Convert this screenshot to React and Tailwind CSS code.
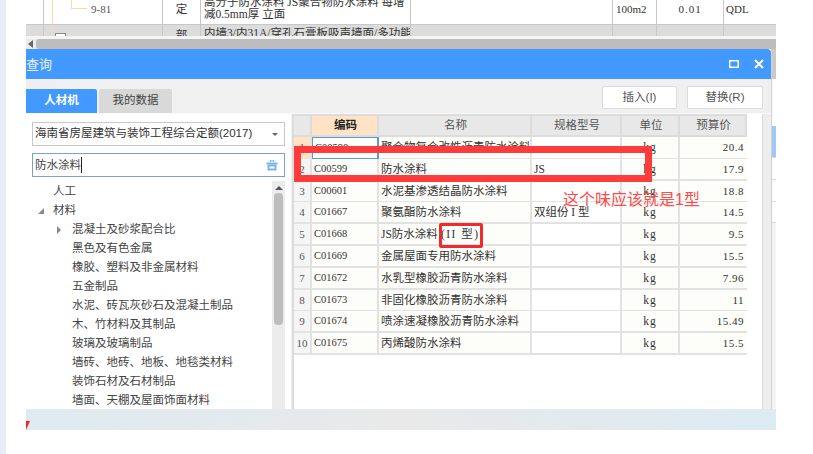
import React from 'react';

const CJK = { fontFamily: '"Liberation Serif", "Noto Sans CJK SC", serif' };
const UI = { fontFamily: '"Liberation Sans", "Noto Sans CJK SC", sans-serif' };

const ROWS = [
  ['C00598', '聚合物复合改性沥青防水涂料', '', '20.4'],
  ['C00599', '防水涂料', 'JS', '17.9'],
  ['C00601', '水泥基渗透结晶防水涂料', '', '18.8'],
  ['C01667', '聚氨酯防水涂料', '双组份 I 型', '14.5'],
  ['C01668', <>JS防水涂料<span className="pl-[3px] tracking-[1.5px]">(II 型)</span></>, '', '9.5'],
  ['C01669', '金属屋面专用防水涂料', '', '15.5'],
  ['C01672', '水乳型橡胶沥青防水涂料', '', '7.96'],
  ['C01673', '非固化橡胶沥青防水涂料', '', '11'],
  ['C01674', '喷涂速凝橡胶沥青防水涂料', '', '15.49'],
  ['C01675', '丙烯酸防水涂料', '', '15.5'],
];

const TREE = [
  { label: '人工', indent: 'pl-[21px]' },
  { label: '材料', indent: 'pl-[21px]', mark: 'open' },
  { label: '混凝土及砂浆配合比', indent: 'pl-[40px]', mark: 'closed' },
  { label: '黑色及有色金属', indent: 'pl-[40px]' },
  { label: '橡胶、塑料及非金属材料', indent: 'pl-[40px]' },
  { label: '五金制品', indent: 'pl-[40px]' },
  { label: '水泥、砖瓦灰砂石及混凝土制品', indent: 'pl-[40px]' },
  { label: '木、竹材料及其制品', indent: 'pl-[40px]' },
  { label: '玻璃及玻璃制品', indent: 'pl-[40px]' },
  { label: '墙砖、地砖、地板、地毯类材料', indent: 'pl-[40px]' },
  { label: '装饰石材及石材制品', indent: 'pl-[40px]' },
  { label: '墙面、天棚及屋面饰面材料', indent: 'pl-[40px]' },
];

const GRID = 'grid grid-cols-[18px_67px_153px_90px_58px_67px]';
const BG_GRID = 'grid grid-cols-[18px_119px_38px_210px_202px_44px_67px_52px]';

const BackgroundTable = () => (
  <div className="h-[36px] overflow-hidden text-[11.5px] leading-[12px] text-[#333]" style={CJK}>
    <div className={`${BG_GRID} h-[25px] bg-white border-b border-[#c8c8c8]`}>
      <div className="border-r border-[#c8c8c8]" />
      <div className="border-r border-[#c8c8c8] relative pl-[47px] pt-[3px] text-[11px] text-[#555]">
        <span className="absolute left-[8px] top-0 h-full w-px bg-[#fbd9a8]" />
        <span className="absolute left-[27px] top-0 h-[9px] w-[16px] border-l border-b border-[#fbd9a8]" />
        9-81
      </div>
      <div className="border-r border-[#c8c8c8] text-center pt-[3px]">定</div>
      <div className="border-r border-[#c8c8c8] pl-[3px] -mt-[4px] whitespace-nowrap overflow-hidden">
        高分子防水涂料 JS聚合物防水涂料 每增<br />减0.5mm厚 立面
      </div>
      <div className="border-r border-[#c8c8c8]" />
      <div className="border-r border-[#c8c8c8] pl-[3px] pt-[3px] text-[11px]">100m2</div>
      <div className="border-r border-[#c8c8c8] text-center pt-[3px] text-[11px] tracking-[1px]">0.01</div>
      <div className="pl-[2px] pt-[3px] text-[11px]">QDL</div>
    </div>
    <div className={`${BG_GRID} h-[11px] bg-[#dcdcdc]`}>
      <div className="border-r border-[#c8c8c8]" />
      <div className="border-r border-[#c8c8c8] relative">
        <span className="absolute left-[11px] top-[8px] h-[10px] w-[11px] border border-[#888] bg-white" />
        <span className="absolute left-[8px] top-0 h-full w-px bg-[#fbd9a8]" />
      </div>
      <div className="border-r border-[#c8c8c8] text-center pt-[4px]">部</div>
      <div className="border-r border-[#c8c8c8] pl-[3px] pt-[2px] whitespace-nowrap overflow-hidden">内墙3/内31A/穿孔石膏板吸声墙面/多功能</div>
      <div className="border-r border-[#c8c8c8]" />
      <div className="border-r border-[#c8c8c8]" />
      <div className="border-r border-[#c8c8c8]" />
      <div />
    </div>
  </div>
);

const TopScrollbar = () => (
  <div className="h-[13px] bg-[#f4f4f4] pt-[3px]">
    <div className="h-[10px] flex items-center bg-[#ececec]">
      <span className="ml-[2px] w-0 h-0 border-y-[4px] border-y-transparent border-r-[5px] border-r-[#666]" />
      <div className="ml-[3px] flex-1 h-full bg-[#bdbdbd] rounded-l-[3px]" />
    </div>
  </div>
);

const TitleBar = () => (
  <div className="h-[30px] bg-[#4299ff] rounded-tr-[4px] flex items-center justify-between text-white text-[13px]" style={UI}>
    <span className="text-[#e8f2ff] pt-[2px]">查询</span>
    <div className="flex items-center gap-[15px] pr-[7px]">
      <svg width="10" height="8" viewBox="0 0 10 8" fill="none" stroke="white">
        <rect x="0.75" y="0.75" width="8.5" height="6.5" strokeWidth="1.5" />
      </svg>
      <svg width="10" height="10" viewBox="0 0 10 10" fill="none" stroke="white" strokeWidth="2">
        <path d="M1 1L9 9M9 1L1 9" />
      </svg>
    </div>
  </div>
);

const Toolbar = () => (
  <div className="h-[35px] bg-[#f0f0f0] flex justify-between items-start border-b border-[#fafafa]" style={UI}>
    <div className="flex gap-[2px] pt-[10px] text-[11.5px]">
      <div className="w-[71px] h-[24px] bg-[#4299ff] rounded-tr-[2px] text-white font-bold flex items-center justify-center">人材机</div>
      <div className="w-[73px] h-[24px] bg-[#d9d9d9] rounded-t-[2px] text-[#444] flex items-center justify-center">我的数据</div>
    </div>
    <div className="flex gap-[10px] pt-[7px] pr-[8px] text-[11.5px] text-[#555]">
      <button className="w-[75px] h-[23px] bg-white border border-[#dcdcdc] rounded-[2px]">插入(I)</button>
      <button className="w-[76px] h-[23px] bg-white border border-[#dcdcdc] rounded-[2px]">替换(R)</button>
    </div>
  </div>
);

const LeftPanel = () => (
  <div className="w-[265px] h-[295px] bg-white flex flex-col pt-[8px] pl-[6px] pr-[6px] overflow-hidden" style={UI}>
    <div className="h-[24px] border border-[#c8c8c8] flex items-center justify-between pl-[2px] pr-[6px] text-[11.5px] text-[#333] shrink-0">
      <span className="whitespace-nowrap">海南省房屋建筑与装饰工程综合定额(2017)</span>
      <span className="w-0 h-0 border-x-[3px] border-x-transparent border-t-[3px] border-t-[#666]" />
    </div>
    <div className="h-[24px] mt-[7px] border border-[#7aa0cf] flex items-center justify-between pl-[2px] pr-[6px] text-[11.5px] text-[#444] shrink-0">
      <span className="border-r border-[#222] leading-[16px]">防水涂料</span>
      <svg width="12" height="12" viewBox="0 0 12 12" fill="#7ab4ef">
        <path d="M4 3V1.2h4V3H7V2.2H5V3z" />
        <path d="M0.5 3.5h11v2h-11z" />
        <path d="M1.5 5.5h9V11.5h-9zM3.5 7.5v2h5v-2z" fillRule="evenodd" />
      </svg>
    </div>
    <div className="flex flex-1 min-h-0 mt-[4px]">
      <div className="flex-1 overflow-hidden text-[11.5px] text-[#444] pt-[1px]">
        {TREE.map((item) => (
          <div key={item.label} className={`h-[19px] leading-[19px] whitespace-nowrap relative ${item.indent}`}>
            {item.mark === 'open' && (
              <span className="absolute left-[6px] top-[7px] w-0 h-0 border-l-[6px] border-l-transparent border-b-[6px] border-b-[#888]" />
            )}
            {item.mark === 'closed' && (
              <span className="absolute left-[25px] top-[6px] w-0 h-0 border-y-[4px] border-y-transparent border-l-[4px] border-l-[#888]" />
            )}
            {item.label}
          </div>
        ))}
      </div>
      <div className="w-[13px] bg-[#ececec] flex flex-col items-center pt-[5px] shrink-0">
        <span className="w-0 h-0 border-x-[4px] border-x-transparent border-b-[4px] border-b-[#555]" />
        <div className="w-[9px] h-[132px] mt-[3px] bg-[#bdbdbd] rounded-[4px]" />
      </div>
    </div>
  </div>
);

const HeaderCell = ({ children, active }) => (
  <div className={`flex items-center justify-center pl-[2px] border-r-2 border-b-2 border-[#dcdcdc] ${active ? 'bg-[#ffe3c4] font-bold text-[#222]' : 'bg-[#e8e8e8] text-[#555]'}`}>
    {children}
  </div>
);

const ResultTable = () => (
  <div className="flex-1 h-[295px] bg-white border-l-2 border-[#dcdcdc] text-[11.5px] text-[#333]" style={CJK}>
    <div className="w-[453px] border-t-2 border-[#dcdcdc]">
      <div className={`${GRID} h-[21px]`} style={UI}>
        <HeaderCell />
        <HeaderCell active>编码</HeaderCell>
        <HeaderCell>名称</HeaderCell>
        <HeaderCell>规格型号</HeaderCell>
        <HeaderCell>单位</HeaderCell>
        <HeaderCell>预算价</HeaderCell>
      </div>
      {ROWS.map((row, i) => (
        <div key={row[0]} className={`${GRID} h-[21.8px] leading-[20px]`}>
          <div className={`text-center border-r-2 border-b-2 border-[#e2e2e2] text-[#555] text-[11px] ${i === 0 ? 'bg-[#ffe3c4]' : 'bg-[#f5f5f5]'}`}>{i + 1}</div>
          <div className={`pl-[2px] bg-[#fdfdf9] text-[10.5px] border-r-2 border-b-2 ${i === 0 ? 'border border-[#5b9bd5]' : 'border-[#e2e2e2]'}`}>{row[0]}</div>
          <div className="pl-[2px] bg-[#fdfdf9] border-r-2 border-b-2 border-[#e2e2e2] whitespace-nowrap overflow-hidden">{row[1]}</div>
          <div className="pl-[2px] bg-white border-r-2 border-b-2 border-[#e2e2e2] whitespace-nowrap overflow-hidden">{row[2]}</div>
          <div className="text-center tracking-[1px] bg-[#fdfdf9] border-r-2 border-b-2 border-[#e2e2e2]">kg</div>
          <div className="text-right pr-[3px] text-[11px] tracking-[0.5px] bg-[#fdfdf9] border-b-2 border-[#e2e2e2]">{row[3]}</div>
        </div>
      ))}
    </div>
  </div>
);

const SideStrip = () => (
  <div className="w-[5px] flex flex-col border-l border-[#d0d0d0]">
    <div className="h-[30px] bg-[#c8c8c8]" />
    <div className="h-[47px] bg-white" />
    <div className="h-[31px] bg-[#9fc9f5]" />
    <div className="h-[22px] bg-white border-t border-[#ddd]" />
    <div className="h-[22px] bg-white border-t border-[#ddd]" />
    <div className="h-[22px] bg-white border-y border-[#ddd]" />
    <div className="flex-1 bg-[#f4f4f4]" />
  </div>
);

export default function App() {
  return (
    <div className="relative w-[813px] h-[454px] bg-white flex overflow-hidden">
      <div className="w-[6px] bg-[#e8edf6]" />
      <div className="w-[750px] ml-[20px] h-[430px] flex flex-col">
        <BackgroundTable />
        <TopScrollbar />
        <div className="flex">
          <div className="w-[745px]">
            <TitleBar />
            <Toolbar />
            <div className="flex">
              <LeftPanel />
              <div className="w-[1px] bg-[#f0f0f0]" />
              <ResultTable />
              <div className="w-[9px] bg-[#eeeeee] border-l border-[#dcdcdc]" />
            </div>
          </div>
          <SideStrip />
        </div>
        <div className="relative flex-1 bg-gradient-to-r from-[#deebf1] via-[#e9e9e9] to-[#dcebf3]">
          <span className="absolute left-0 bottom-0 w-0 h-0 border-l-[4px] border-l-[#ff2020] border-b-[9px] border-b-transparent" />
        </div>
      </div>

      {/* 红色标注 */}
      <div className="absolute left-[294px] top-[146px] w-[358px] h-[36px] border-[7px] border-[#ff3b3b]" />
      <div className="absolute left-[439px] top-[223px] w-[44px] h-[25px] border-[3px] border-[#f02b2b] rounded-[2px]" />
      <div className="absolute left-[563px] top-[190px] text-[16px] leading-[20px] text-[#ff4a4a] whitespace-nowrap" style={UI}>这个味应该就是1型</div>
    </div>
  );
}
